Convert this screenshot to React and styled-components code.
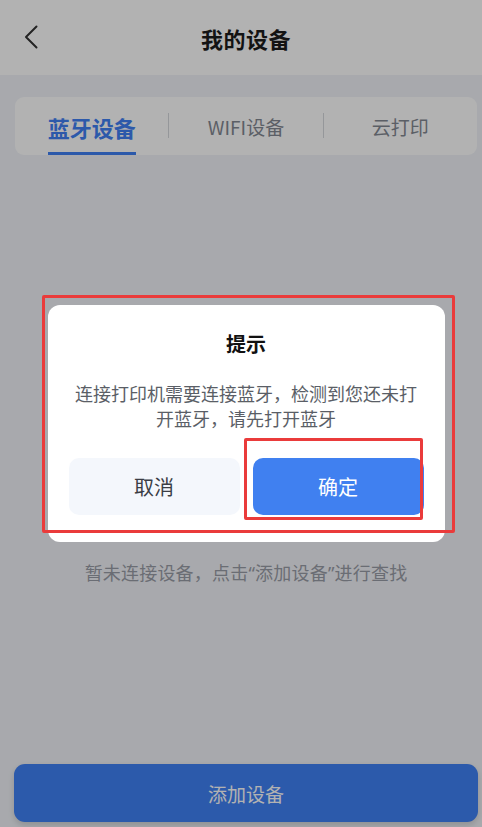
import React from 'react'
import styled, { createGlobalStyle } from 'styled-components'

const Global = createGlobalStyle`
  html, body {
    margin: 0;
    padding: 0;
    overflow: hidden;
    background: #f1f3f8;
  }
  * { box-sizing: border-box; }
`

const Page = styled.div`
  position: relative;
  width: 492px;
  height: 827px;
  display: flex;
  flex-direction: column;
  background: #f1f3f8;
  font-family: "Noto Sans CJK SC", "Noto Sans", sans-serif;
`

const Header = styled.header`
  height: 75px;
  background: #fff;
  display: flex;
  align-items: center;
  justify-content: center;
  position: relative;
  h1 {
    margin: 0;
    font-size: 22px;
    font-weight: 700;
    color: #1c1c1c;
    letter-spacing: 0.5px;
  }
`

const Back = styled.button`
  position: absolute;
  left: 20px;
  top: 24px;
  border: 0;
  background: none;
  padding: 0;
  width: 22px;
  height: 26px;
  display: flex;
  align-items: center;
  justify-content: center;
`

const Tabs = styled.nav`
  margin: 22px 15px 0;
  height: 58px;
  padding-top: 15px;
  background: #fff;
  border-radius: 9px;
  display: flex;
`

const Tab = styled.div`
  flex: 1;
  display: flex;
  justify-content: center;
  align-items: flex-start;
  span {
    line-height: 30px;
    font-size: ${p => (p.$active ? '22px' : '19px')};
    font-weight: ${p => (p.$active ? 700 : 400)};
    color: ${p => (p.$active ? '#3f80f4' : '#838892')};
    padding-bottom: 10px;
    border-bottom: 3px solid ${p => (p.$active ? '#3f80f4' : 'transparent')};
  }
`

const Divider = styled.i`
  width: 1px;
  height: 25px;
  margin-top: 1px;
  background: #d6d8dd;
`

const Empty = styled.div`
  margin-top: 363px;
  display: flex;
  flex-direction: column;
  align-items: center;
  gap: 19px;
  p {
    margin: 0;
    line-height: 24px;
    font-size: 18px;
    color: #999ca6;
    letter-spacing: 0.2px;
    font-family: "Noto Sans", "Noto Sans CJK SC", sans-serif;
  }
`

const AddButton = styled.button`
  margin: auto 14px 5px;
  height: 58px;
  border: 0;
  border-radius: 11px;
  background: #3f81f5;
  color: #fff;
  font-family: inherit;
  font-size: 19px;
  box-shadow: 0 3px 6px rgba(0, 0, 0, 0.15);
`

const Mask = styled.div`
  position: absolute;
  inset: 0;
  background: rgba(0, 0, 0, 0.3);
  padding-top: 305px;
  display: flex;
  justify-content: center;
  align-items: flex-start;
`

const Dialog = styled.div`
  width: 397px;
  background: #fff;
  border-radius: 12px;
  padding: 25px 21px 27px;
  display: flex;
  flex-direction: column;
  align-items: center;
  h2 {
    margin: 0;
    line-height: 28px;
    font-size: 20px;
    font-weight: 700;
    color: #111;
  }
  p {
    margin: 23px 2px 27px;
    line-height: 25px;
    font-size: 18px;
    color: #5a5e66;
    text-align: center;
  }
`

const Actions = styled.div`
  align-self: stretch;
  display: flex;
  gap: 13px;
`

const ActionButton = styled.button`
  flex: 1;
  height: 57px;
  border: 0;
  border-radius: 10px;
  font-family: inherit;
  font-size: 20px;
  background: ${p => (p.$primary ? '#4080f0' : '#f4f7fc')};
  color: ${p => (p.$primary ? '#fff' : '#3a3d44')};
`

const Mark = styled.div`
  position: absolute;
  border: 3px solid #ea3b3b;
  border-radius: 2px;
`

export default function App() {
  return (
    <Page>
      <Global />
      <Header>
        <Back aria-label="返回">
          <svg width="14" height="24" viewBox="0 0 14 24">
            <path d="M12.5 1.5 L2 12 L12.5 22.5" fill="none" stroke="#333" strokeWidth="2" strokeLinecap="round" strokeLinejoin="round" />
          </svg>
        </Back>
        <h1>我的设备</h1>
      </Header>
      <Tabs>
        <Tab $active><span>蓝牙设备</span></Tab>
        <Divider />
        <Tab><span>WIFI设备</span></Tab>
        <Divider />
        <Tab><span>云打印</span></Tab>
      </Tabs>
      <Empty>
        <p>暂无已连接的打印机</p>
        <p>暂未连接设备，点击“添加设备”进行查找</p>
      </Empty>
      <AddButton>添加设备</AddButton>

      <Mask>
        <Dialog>
          <h2>提示</h2>
          <p>连接打印机需要连接蓝牙，检测到您还未打开蓝牙，请先打开蓝牙</p>
          <Actions>
            <ActionButton>取消</ActionButton>
            <ActionButton $primary>确定</ActionButton>
          </Actions>
        </Dialog>
        <Mark style={{ left: 42, top: 295, width: 413, height: 238 }} />
        <Mark style={{ left: 244, top: 438, width: 179, height: 82 }} />
      </Mask>
    </Page>
  )
}
